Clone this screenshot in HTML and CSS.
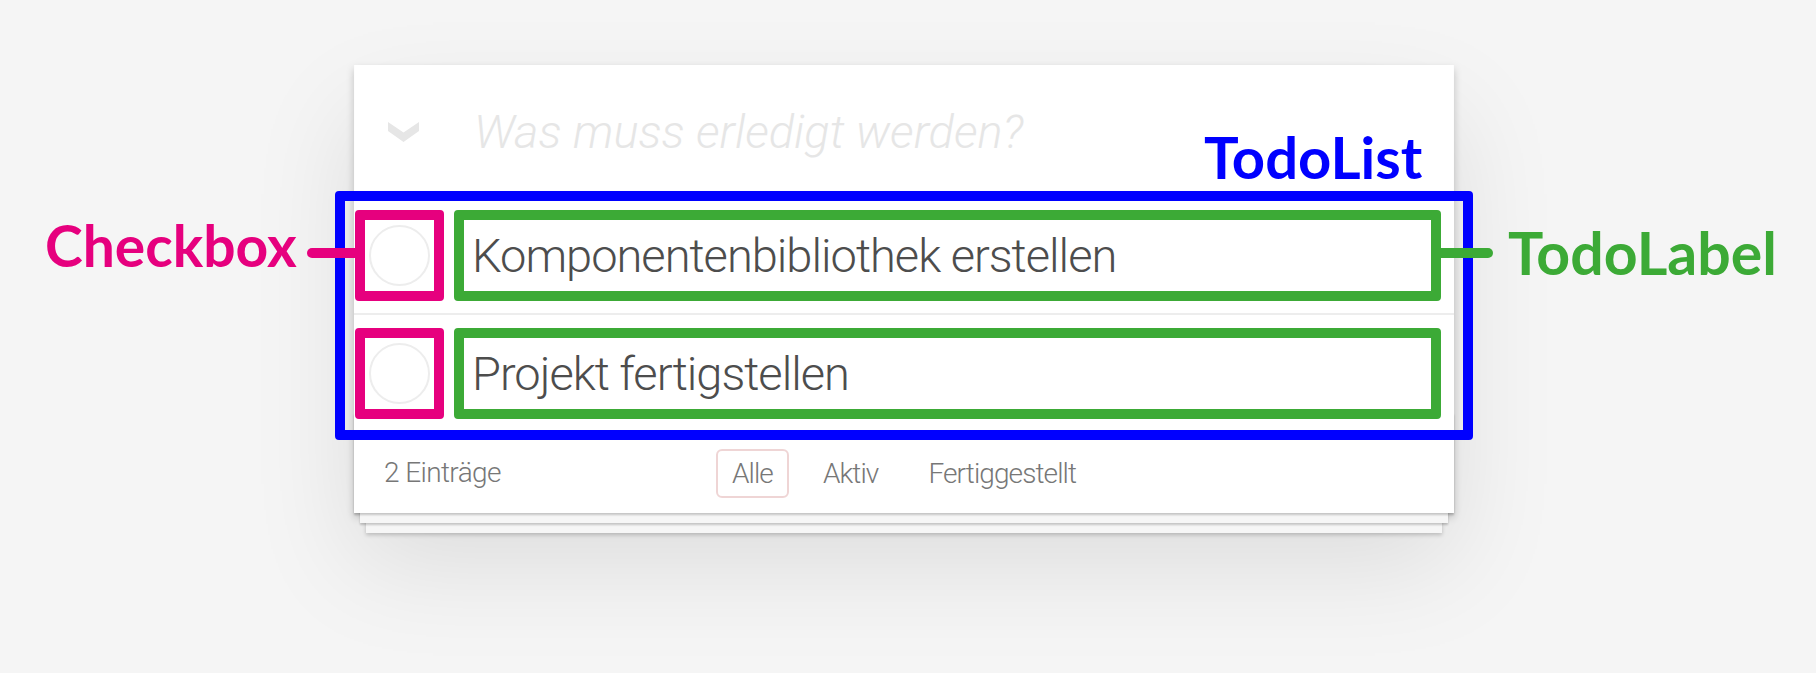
FILE: index.html
```html
<!DOCTYPE html>
<html lang="de">
<head>
<meta charset="utf-8">
<title>Todo</title>
<link rel="stylesheet" href="styles.css">
</head>
<body>
<section class="todoapp">
  <header class="header">
    <span class="toggle-all">
      <svg class="chevron" width="31" height="20" viewBox="0 0 31 20"><polygon points="0,0 15.5,10.5 31,0 31,9 15.5,20 0,9" fill="#e6e6e6"/></svg>
    </span>
    <span class="new-todo">Was muss erledigt werden?</span>
  </header>
  <section class="main">
    <ul class="todo-list">
      <li class="todo"><span class="toggle"></span><label class="todo-label">Komponentenbibliothek erstellen</label></li>
      <li class="todo"><span class="toggle"></span><label class="todo-label">Projekt fertigstellen</label></li>
    </ul>
  </section>
  <footer class="footer">
    <span class="todo-count">2 Einträge</span>
    <ul class="filters">
      <li><a class="selected">Alle</a></li>
      <li><a>Aktiv</a></li>
      <li><a>Fertiggestellt</a></li>
    </ul>
    <span></span>
  </footer>
</section>
<div class="annotations">
  <div class="box box-list"></div>
  <div class="box box-check box-row1"></div>
  <div class="box box-check box-row2"></div>
  <div class="box box-label box-row1"></div>
  <div class="box box-label box-row2"></div>
  <div class="connector connector-check"></div>
  <div class="connector connector-label"></div>
  <div class="anno-text text-check">Checkbox</div>
  <div class="anno-text text-list">TodoList</div>
  <div class="anno-text text-label">TodoLabel</div>
</div>
</body>
</html>
```
FILE: styles.css
```css
html, body {
  margin: 0;
}
body {
  padding: 65px 8px 0 0;
  min-height: 673px;
  box-sizing: border-box;
  background: #f5f5f5;
  font-family: Roboto, "Liberation Sans", sans-serif;
  font-weight: 300;
  color: #4d4d4d;
  position: relative;
}
.todoapp {
  width: 1100px;
  margin: 0 auto;
  background: #fff;
  position: relative;
  box-shadow: 0 4px 8px 0 rgba(0,0,0,0.2), 0 50px 100px 0 rgba(0,0,0,0.1);
}
.header {
  display: flex;
  align-items: center;
  height: 130px;
  box-shadow: inset 0 -4px 2px rgba(0,0,0,0.03);
}
.toggle-all {
  width: 120px;
  box-sizing: border-box;
  padding-left: 34px;
  margin-top: 4px;
  display: flex;
  flex: none;
}
.new-todo {
  font-size: 47px;
  font-style: italic;
  line-height: 67px;
  color: #e6e6e6;
  margin-top: 3px;
}
.main {
  border-top: 2px solid #e6e6e6;
}
.todo-list {
  list-style: none;
  margin: 0;
  padding: 0;
}
.todo {
  display: flex;
  align-items: center;
  border-bottom: 2px solid #ededed;
  font-size: 47px;
  letter-spacing: -1px;
}
.todo:last-child {
  border-bottom: none;
}
.toggle {
  flex: none;
  width: 61px;
  height: 61px;
  box-sizing: border-box;
  border: 2px solid #ededed;
  border-radius: 50%;
  margin-left: 15px;
}
.todo-label {
  padding: 30px 30px 28px 42px;
  line-height: 58px;
  color: #4d4d4d;
}
.footer {
  position: relative;
  height: 82px;
  box-sizing: border-box;
  padding: 0 30px;
  border-top: 2px solid #e6e6e6;
  display: grid;
  grid-template-columns: 1fr auto 1fr;
  align-items: center;
  color: #777;
  font-size: 28px;
  letter-spacing: -0.6px;
}
.footer::before {
  content: '';
  position: absolute;
  right: 0;
  bottom: 0;
  left: 0;
  height: 100px;
  overflow: hidden;
  box-shadow: 0 2px 2px rgba(0,0,0,0.2),
              0 16px 0 -6px #f6f6f6,
              0 18px 2px -6px rgba(0,0,0,0.2),
              0 32px 0 -12px #f6f6f6,
              0 34px 4px -12px rgba(0,0,0,0.2);
}
.todo-count {
  line-height: 40px;
}
.filters {
  display: flex;
  gap: 18px;
  list-style: none;
  margin: 0;
  padding: 0;
  letter-spacing: -0.9px;
}
.filters a {
  display: block;
  padding: 6px 14px;
  border: 2px solid transparent;
  border-radius: 6px;
  line-height: 33px;
  color: #777;
}
.filters a.selected {
  border-color: rgba(175,47,47,0.2);
}

/* annotation overlay */
.annotations {
  position: absolute;
  left: 0;
  top: 0;
  width: 100%;
  height: 100%;
  pointer-events: none;
}
.box {
  position: absolute;
  box-sizing: border-box;
  border: 10px solid;
  border-radius: 4px;
}
.box-list {
  left: 335px;
  top: 191px;
  width: 1138px;
  height: 249px;
  border-color: #0000ff;
}
.box-check {
  left: 355px;
  width: 89px;
  height: 91px;
  border-color: #e6007e;
}
.box-label {
  left: 454px;
  width: 987px;
  height: 91px;
  border-color: #3caa36;
}
.box-row1 { top: 210px; }
.box-row2 { top: 328px; }
.connector {
  position: absolute;
  top: 248px;
  height: 10px;
}
.connector-check {
  left: 307px;
  width: 50px;
  background: #e6007e;
  border-radius: 5px 0 0 5px;
}
.connector-label {
  left: 1439px;
  width: 54px;
  background: #3caa36;
  border-radius: 0 5px 5px 0;
}
.anno-text {
  position: absolute;
  font-family: Lato, "Noto Sans", sans-serif;
  font-weight: 700;
  font-size: 57px;
  line-height: 57px;
  white-space: nowrap;
}
.text-check {
  left: 45px;
  top: 217px;
  color: #e6007e;
}
.text-list {
  left: 1204px;
  top: 128px;
  font-size: 58px;
  color: #0000ff;
}
.text-label {
  left: 1508px;
  top: 224px;
  font-size: 59px;
  color: #3caa36;
}
```
